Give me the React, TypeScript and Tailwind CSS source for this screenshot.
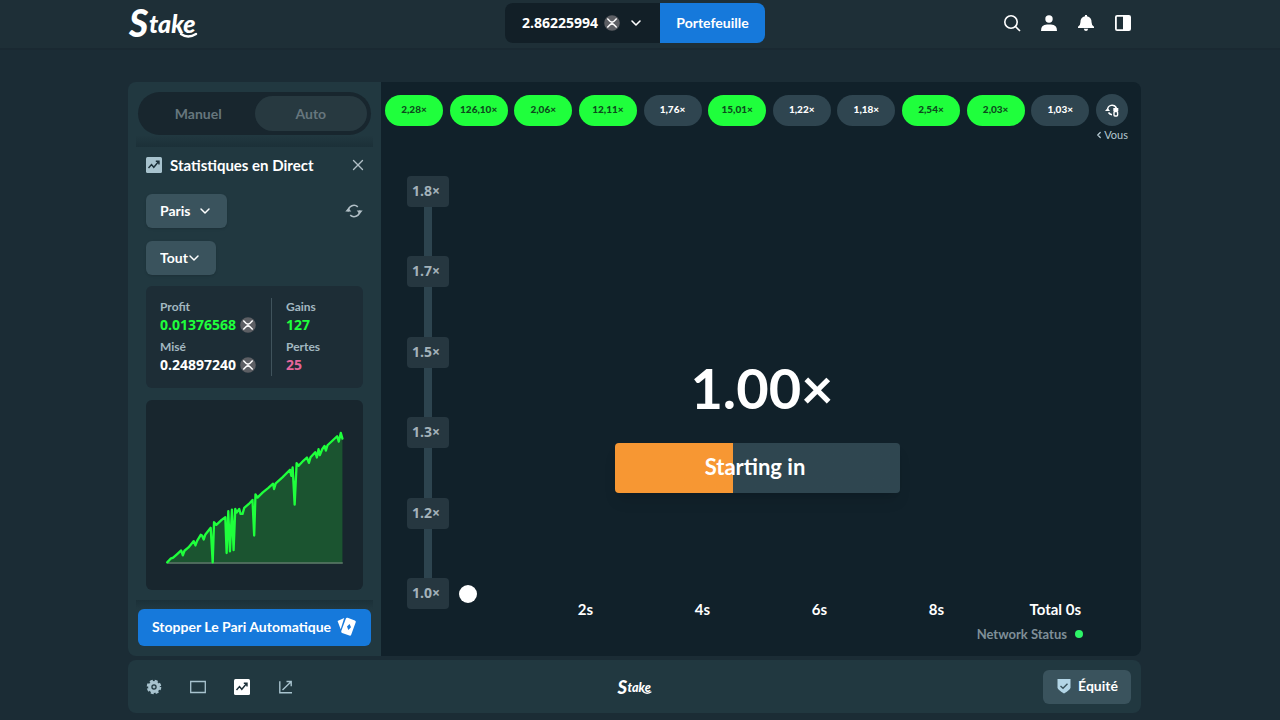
import { useState } from "react";
import { ChevronDown, ChevronLeft, X } from "lucide-react";

const rounds = ["2,28", "126,10", "2,06", "12,11", "1,76", "15,01", "1,22", "1,18", "2,54", "2,03", "1,03"];
const levels = ["1.8", "1.7", "1.5", "1.3", "1.2", "1.0"];
const ticks = ["2s", "4s", "6s", "8s"];

const profitLine =
  "142,521 152,510 160,507 172,496 184,485 189,500 194,486 206,476 222,457 227,470 232,456 243,438 247,440 252,452 257,437 273,417 279,521 283,400 290,408 306,393 317,385 321,493 326,367 331,488 337,362 342,484 347,360 351,371 359,360 363,375 369,375 374,357 388,345 399,333 404,440 408,316 414,326 430,310 446,297 461,284 464,300 469,283 490,264 512,242 516,260 520,235 526,347 532,222 538,230 552,215 563,205 569,221 574,204 588,189 593,205 598,180 602,198 609,180 616,170 620,184 625,168 638,156 654,141 659,157 665,131 670,148";

export default function App() {
  return (
    <div className="flex min-h-screen flex-col bg-[#1b2c35] font-['Lato','Liberation_Sans',sans-serif] text-white">
      <TopBar />
      <main className="flex flex-1 flex-col gap-1 pt-8 pb-2 pl-32 pr-[139px]">
        <div className="flex flex-1 overflow-hidden rounded-lg">
          <BetPanel />
          <GamePanel />
        </div>
        <FooterBar />
      </main>
    </div>
  );
}

function TopBar() {
  return (
    <header className="grid h-[50px] grid-cols-[1fr_auto_1fr] items-center border-b-2 border-[#1a2932] bg-[#1e2f37] pb-[2px] pl-32 pr-[148px]">
      <a href="#" aria-label="Stake">
        <StakeLogo className="h-[46px] w-[72px]" />
      </a>
      <div className="mr-[-10px] flex h-10 text-sm font-bold">
        <button className="flex w-[155px] items-center rounded-l-lg bg-[#121f27] pb-px pl-[17px]">
          <span className="font-['Open_Sans',sans-serif]">2.86225994</span>
          <CoinIcon className="ml-[6px] size-4" />
          <ChevronDown className="ml-2 size-4" strokeWidth={2.4} />
        </button>
        <button className="w-[105px] rounded-r-lg bg-[#1679db] pb-px">Portefeuille</button>
      </div>
      <nav className="flex items-center justify-end gap-[19px]">
        <button aria-label="Rechercher">
          <svg viewBox="0 0 18 18" className="size-[18px]" fill="none" stroke="currentColor" strokeWidth="1.6">
            <circle cx="8" cy="8" r="6.2" />
            <path d="M12.5 12.5 17 17" />
          </svg>
        </button>
        <button aria-label="Profil">
          <svg viewBox="0 0 18 18" className="size-[18px]" fill="currentColor">
            <circle cx="9" cy="5" r="3.7" />
            <path d="M1 17q-.2-6.500 6-6.500h4q6.200 0 6 6.500z" />
          </svg>
        </button>
        <button aria-label="Notifications">
          <svg viewBox="0 0 18 18" className="size-[18px]" fill="currentColor">
            <path d="M8 2.200V1h2v1.200q4.600.8 4.600 6.300 0 3 2.400 4.200V14H1v-1.300q2.400-1.200 2.400-4.200Q3.400 3 8 2.200z" />
            <path d="M6.800 14.800h4.400Q10.800 17 9 17t-2.200-2.200z" />
          </svg>
        </button>
        <button aria-label="Panneau">
          <svg viewBox="0 0 18 18" className="size-[18px]">
            <rect x="1.900" y="1.900" width="14.200" height="14.200" rx="1.200" fill="none" stroke="currentColor" strokeWidth="1.800" />
            <path d="M9 2h7v14H9z" fill="currentColor" />
          </svg>
        </button>
      </nav>
    </header>
  );
}

function BetPanel() {
  const [mode, setMode] = useState("Auto");

  return (
    <aside className="flex w-[253px] shrink-0 flex-col bg-[#213840] pt-[10px]">
      <div className="mx-[10px] flex h-[43px] rounded-full bg-[#18262e] p-1 text-sm font-bold text-[#66767d]">
        {["Manuel", "Auto"].map((m) => (
          <button
            key={m}
            onClick={() => setMode(m)}
            className={`flex-1 rounded-full ${mode === m ? "bg-[#273940]" : ""}`}
          >
            {m}
          </button>
        ))}
      </div>
      <div className="mx-2 h-3 bg-linear-to-b from-[#213840] to-[#1b3038]" />

      <section className="flex flex-1 flex-col px-[18px]">
        <div className="flex h-9 items-center">
          <TrendTile className="size-4 text-[#a8c3ce]" />
          <h2 className="ml-2 text-[15px] font-bold">Statistiques en Direct</h2>
          <button aria-label="Fermer" className="-mr-1 ml-auto">
            <X className="size-[18px] text-[#b1bfc6]" strokeWidth={1.8} />
          </button>
        </div>
        <div className="mt-[11px] flex items-center justify-between">
          <Dropdown label="Type" value="Paris" className="w-[81px]" />
          <button aria-label="Réinitialiser">
            <RefreshIcon className="size-[18px] text-[#b1bfc6]" />
          </button>
        </div>
        <div className="mt-[13px]">
          <Dropdown label="Jeu" value="Tout" className="w-[70px]" />
        </div>

        <div className="mt-[11px] flex h-[102px] rounded-md bg-[#1d2d36] px-[14px] py-3">
          <dl className="flex-1">
            <Stat label="Profit" value="0.01376568" color="text-[#1fff3c]" coin />
            <Stat label="Misé" value="0.24897240" color="text-white" coin />
          </dl>
          <dl className="w-[78px] border-l border-[#40535c] pl-[14px]">
            <Stat label="Gains" value="127" color="text-[#1fff3c]" />
            <Stat label="Pertes" value="25" color="text-[#e4669b]" />
          </dl>
        </div>

        <div className="mt-3 rounded-md bg-[#18262e]">
          <svg viewBox="78 33 654 570" className="block h-[190px] w-full" role="img" aria-label="Profit">
            <polygon points={`${profitLine} 670,522`} fill="#1b5430" />
            <path d="M142 523H671" stroke="#5f7f6b" strokeWidth="4" />
            <polyline points={profitLine} fill="none" stroke="#1fff3c" strokeWidth="7" strokeLinejoin="round" strokeLinecap="round" />
          </svg>
        </div>
      </section>

      <div className="mx-2 mt-[9px] h-[9px] bg-linear-to-b from-[#1b3038] to-[#213840]" />
      <div className="px-[10px] pb-[10px]">
        <button className="flex h-[37px] w-full items-center justify-center gap-[6px] rounded-md bg-[#1679db] pb-px text-sm font-bold">
          Stopper Le Pari Automatique
          <CardsIcon className="size-5" />
        </button>
      </div>
    </aside>
  );
}

function Dropdown({ label, value, className }: { label: string; value: string; className: string }) {
  return (
    <div className={`relative ${className}`}>
      <select
        aria-label={label}
        className="h-[34px] w-full appearance-none rounded-md bg-[#3a535d] pb-px pl-[14px] text-sm font-bold shadow-sm"
      >
        <option>{value}</option>
      </select>
      <ChevronDown className="pointer-events-none absolute top-[9px] right-[14px] size-4" strokeWidth={2.2} />
    </div>
  );
}

function Stat({ label, value, color, coin }: { label: string; value: string; color: string; coin?: boolean }) {
  return (
    <div className="h-10">
      <dt className="text-xs leading-[18px] font-bold text-[#a3b8c1]">{label}</dt>
      <dd className={`flex items-center gap-1 font-['Open_Sans',sans-serif] text-sm leading-[18px] font-bold ${color}`}>
        {value}
        {coin && <CoinIcon className="size-4 shrink-0" />}
      </dd>
    </div>
  );
}

function GamePanel() {
  return (
    <section className="flex min-w-0 flex-1 flex-col bg-[#11212a] pt-3">
      <div className="flex items-center justify-between pr-[13px] pl-1">
        {rounds.map((r) => (
          <button
            key={r}
            className={`h-[31px] w-[58px] rounded-full pb-px text-[10px] font-black ${
              parseFloat(r.replace(",", ".")) >= 2 ? "bg-[#1fff3c] text-[#0d4a1c]" : "bg-[#2f4550]"
            }`}
          >
            {r}×
          </button>
        ))}
        <button aria-label="Historique" className="flex size-8 items-center justify-center rounded-full bg-[#2f4550]">
          <HistoryIcon className="size-[14px]" />
        </button>
      </div>
      <a href="#" className="mr-[13px] flex items-center self-end text-[11px] leading-[18px] text-[#b4c8d1]">
        <ChevronLeft className="size-[10px]" strokeWidth={3} />
        Vous
      </a>

      <div className="mt-8 flex flex-1 gap-[10px] pr-[60px] pl-[26px]">
        <div className="flex h-[433px] w-[42px] flex-col items-center font-['Open_Sans',sans-serif]">
          {levels.map((l, i) => (
            <div key={l} className={`flex w-full flex-col items-center ${i > 0 ? "flex-1" : ""}`}>
              {i > 0 && <div className="w-2 flex-1 bg-[#2d444f]" />}
              <div className="h-[31px] w-full rounded-sm bg-[#263740] pl-[5px] text-sm leading-[30px] font-bold text-[#a3b2ba]">
                {l}×
              </div>
            </div>
          ))}
        </div>

        <div className="flex min-w-0 flex-1 flex-col">
          <div className="flex h-[427px] flex-col items-center pt-[180px] pr-4">
            <p className="text-[56px] leading-[64px] font-bold">1.00×</p>
            <div className="mt-[23px] mr-[10px] flex h-[50px] w-[285px] items-center justify-center rounded-sm bg-linear-to-r from-[#f79733] from-[41.5%] to-[#2f4650] to-[41.5%] pr-1 pb-[3px] text-[22px] font-bold shadow-lg">
              Starting in
            </div>
            <div className="mt-auto size-[18px] self-start rounded-full bg-white" />
          </div>
          <div className="flex pl-[68px] text-[15px] leading-3 font-bold">
            {ticks.map((t) => (
              <span key={t} className="flex-[117] text-center">
                {t}
              </span>
            ))}
            <span className="flex-[86] text-right whitespace-nowrap">Total 0s</span>
          </div>
          <div className="mt-[11px] -mr-[2px] flex items-center justify-end gap-2 pb-[14px] text-[13px] leading-4 font-bold text-[#7f8f98]">
            Network Status
            <span className="size-2 rounded-full bg-[#2df568]" />
          </div>
        </div>
      </div>
    </section>
  );
}

function FooterBar() {
  return (
    <footer className="grid h-[53px] grid-cols-[1fr_auto_1fr] items-center rounded-lg bg-[#213840] pr-[10px] pl-[18px] text-[#a8c3ce]">
      <div className="flex items-center gap-7">
        <button aria-label="Paramètres">
          <svg viewBox="0 0 16 16" className="size-4" fill="none" stroke="currentColor">
            <circle cx="8" cy="8" r="4.300" strokeWidth="3.200" />
            <circle cx="8" cy="8" r="6.300" strokeWidth="2" strokeDasharray="3 1.948" />
            <circle cx="8" cy="8" r="1" fill="currentColor" />
          </svg>
        </button>
        <button aria-label="Mode théâtre">
          <svg viewBox="0 0 16 16" className="size-4" fill="none" stroke="currentColor" strokeWidth="1.300">
            <path d="M.7 2.500h14.600v11H.7z" />
          </svg>
        </button>
        <button aria-label="Statistiques en direct">
          <TrendTile className="size-4 text-white" />
        </button>
        <button aria-label="Partager">
          <svg viewBox="0 0 16 16" className="size-4" fill="none" stroke="currentColor" strokeWidth="1.400">
            <path d="M1.800 2.200v11.600H14M4.500 11 13 2.700M8.500 2.500h4.700v4.700" />
          </svg>
        </button>
      </div>
      <StakeLogo className="mr-2 h-[23px] w-9 text-white" />
      <button className="flex h-[34px] w-[88px] items-center justify-center gap-[6px] justify-self-end rounded-md bg-[#3a535d] pb-px text-sm font-bold">
        <svg viewBox="0 0 16 16" className="size-4">
          <path d="M1.500 1h13v8.500q0 2-6.500 6-6.500-4-6.500-6z" fill="#b3d5e6" />
          <path d="m4.500 8 2.500 2.300 4.500-4.600" fill="none" stroke="#3a535d" strokeWidth="1.400" />
        </svg>
        <span className="text-white">Équité</span>
      </button>
    </footer>
  );
}

type IconProps = { className?: string };

function StakeLogo({ className = "" }: IconProps) {
  return (
    <svg viewBox="0 0 72 46" className={className} fill="currentColor">
      <text fontFamily="Lato, sans-serif" fontStyle="italic" fontWeight="900">
        <tspan x="1" y="37" fontSize="37">S</tspan>
        <tspan x="21" y="33" fontSize="25">take</tspan>
      </text>
      <path d="M53 34q7 5 15 0" fill="none" stroke="currentColor" strokeWidth="2.500" strokeLinecap="round" />
    </svg>
  );
}

function CoinIcon({ className }: IconProps) {
  return (
    <svg viewBox="0 0 16 16" className={className}>
      <circle cx="8" cy="8" r="7.800" fill="#5d5f64" />
      <path
        d="M3.300 3.500 6 6.200q2 1.800 4 0l2.700-2.700M3.300 12.500 6 9.800q2-1.800 4 0l2.700 2.700"
        fill="none"
        stroke="#fff"
        strokeWidth="1.500"
      />
    </svg>
  );
}

function TrendTile({ className }: IconProps) {
  return (
    <svg viewBox="0 0 16 16" className={className}>
      <rect width="16" height="16" rx="1.500" fill="currentColor" />
      <path d="m2.500 11 3-3.500 2.300 2.800 5-6M9.800 4.200h3.200v3.200" fill="none" stroke="#1d313a" strokeWidth="1.400" />
    </svg>
  );
}

function RefreshIcon({ className }: IconProps) {
  return (
    <svg viewBox="0 0 18 18" className={className}>
      <path d="M3.300 9.500a5.700 5.700 0 0 1 9.500-4.700M14.700 8.500a5.700 5.700 0 0 1-9.500 4.700" fill="none" stroke="currentColor" strokeWidth="1.600" />
      <path d="M.3 9.500h6L3.300 6zM11.700 8.500h6L14.700 12z" fill="currentColor" />
    </svg>
  );
}

function HistoryIcon({ className }: IconProps) {
  return (
    <svg viewBox="0 0 14 14" className={className}>
      <path d="M2.700 7.500a4.500 4.500 0 0 1 8.700-2.200M3.500 9.500q1.300 2 3.500 2.300" fill="none" stroke="currentColor" strokeWidth="1.500" />
      <path d="M0 8h5L2.600 5zM8.300 5h5v3.300h-5z" fill="currentColor" />
      <rect x="9" y="8.500" width="3.600" height="4.500" rx="1" fill="none" stroke="currentColor" strokeWidth="1.400" />
    </svg>
  );
}

function CardsIcon({ className }: IconProps) {
  return (
    <svg viewBox="0 0 18 18" className={className}>
      <path d="M.5 3.500 6.500.8 3.300 11z" fill="#fff" />
      <rect x="5.500" y="1.500" width="9.500" height="14.500" rx="1.300" fill="#fff" transform="rotate(20 10.500 9)" />
      <path d="m11.300 6.200 1.300 3-2.400 2.400-1.200-3z" fill="#1679db" />
    </svg>
  );
}
